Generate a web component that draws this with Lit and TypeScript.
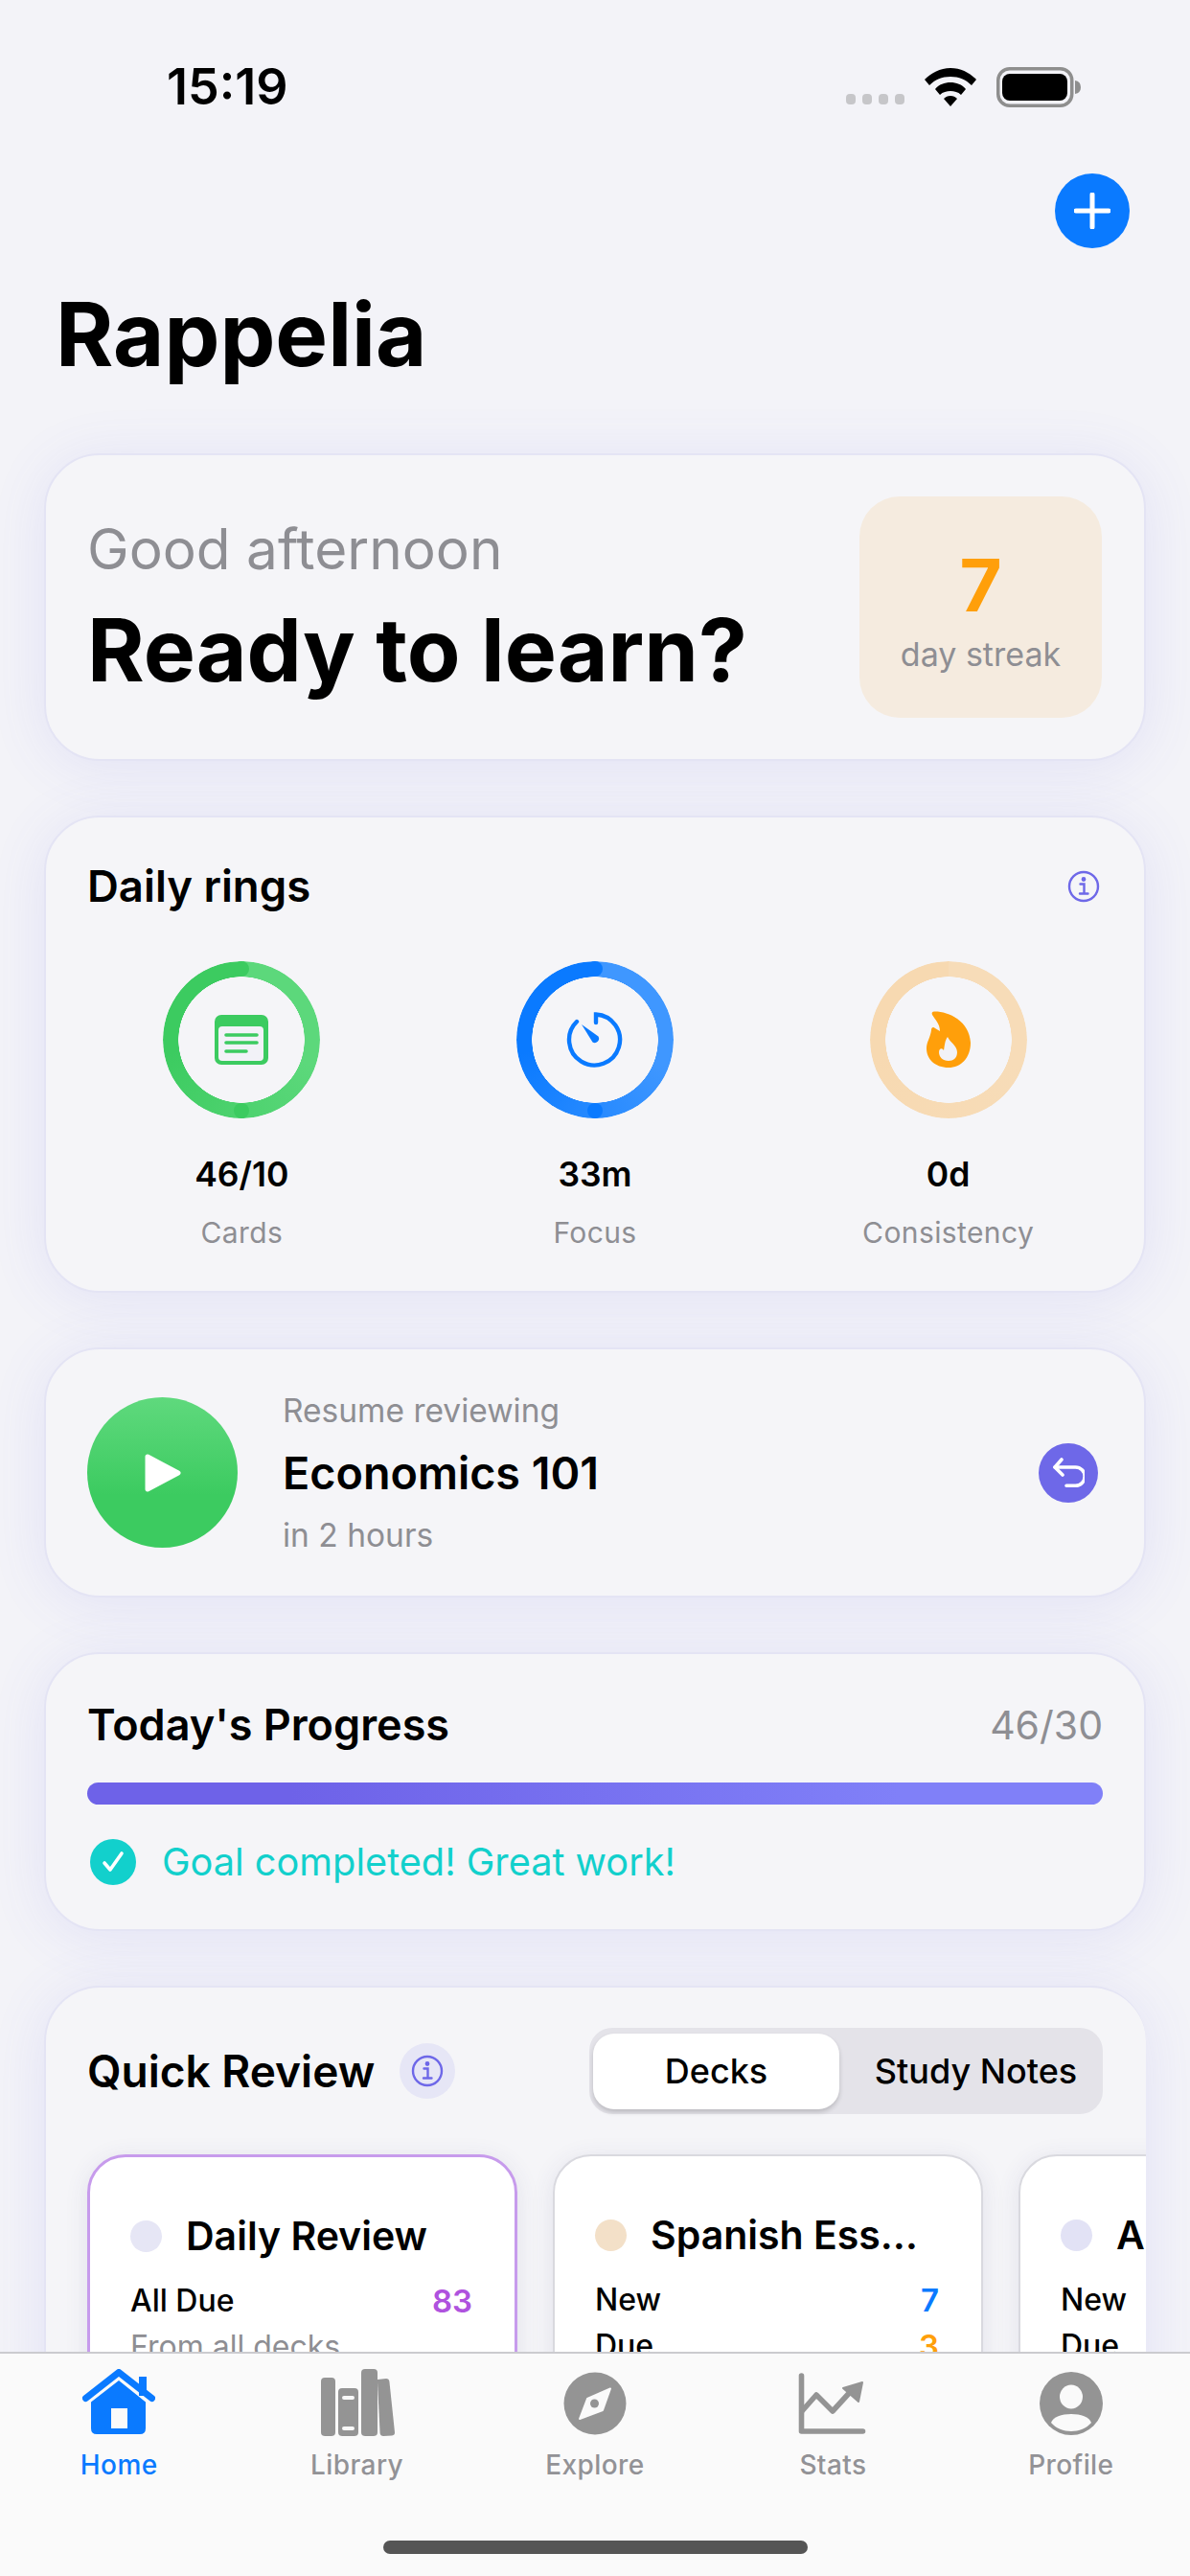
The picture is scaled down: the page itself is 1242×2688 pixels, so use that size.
import { LitElement, css, html } from "lit";
import { customElement } from "lit/decorators.js";

const infoIcon = (size: number) => html`
  <svg width=${size} height=${size} viewBox="0 0 34 34" fill="none" stroke="#6e68e8" stroke-width="2.4" stroke-linecap="round">
    <circle cx="17" cy="17" r="15"></circle>
    <path d="M13.5 14.5h4v10M13 24.5h8.5"></path>
    <circle cx="17" cy="9.5" r="1.2" fill="#6e68e8"></circle>
  </svg>
`;

const rings = [
  {
    tone: "green",
    value: "46/10",
    label: "Cards",
    progress: true,
    icon: html`<svg width="56" height="52" viewBox="0 0 56 52">
      <rect width="56" height="52" rx="7" fill="#3ccb60"></rect>
      <rect x="4" y="12" width="47" height="36" rx="4" fill="#f2f2f7"></rect>
      <path d="M12 21h32M12 29h32M12 38h21" stroke="#3ccb60" stroke-width="3.6" stroke-linecap="round"></path>
    </svg>`,
  },
  {
    tone: "blue",
    value: "33m",
    label: "Focus",
    progress: true,
    icon: html`<svg width="60" height="60" viewBox="0 0 60 60" fill="none">
      <path d="M31 12V3.5A26.5 26.5 0 1 1 11 11" stroke="#0a7aff" stroke-width="4.4" stroke-linecap="round"></path>
      <path d="M16 14l17.5 12.5a4.4 4.4 0 0 1-6 6z" fill="#0a7aff"></path>
    </svg>`,
  },
  {
    tone: "orange",
    value: "0d",
    label: "Consistency",
    progress: false,
    icon: html`<svg width="46" height="60" viewBox="0 0 46 60">
      <path fill="#ff9f0a" d="M8 .5C22 0 45 10 46 33 46 49 36 59 23 59 9 59 0 50 0 39 0 32 4 28 5 20 5 17 7 16 9 18L14 21C14 13 9 9 6 4 5 2 6 .5 8 .5Z"></path>
      <path fill="#f2f2f7" d="M22 27C24 32 32 36 32 43 32 49 28 52 23 52 17 52 13 48 13 43 13 39 16 38 18 41 19 36 19 31 22 27Z"></path>
    </svg>`,
  },
];

const decks = [
  { name: "Daily Review", dot: "#e6e6f5", selected: true, rows: [["All Due", "83", "purple"]], note: "From all decks" },
  { name: "Spanish Ess…", dot: "#f3e0c8", selected: false, rows: [["New", "7", "blue"], ["Due", "3", "amber"]], note: "" },
  { name: "All Decks", dot: "#e2e2f5", selected: false, rows: [["New", "5", "blue"], ["Due", "2", "amber"]], note: "" },
];

const tabIcons: Record<string, unknown> = {
  Home: html`<svg width="76" height="70" viewBox="0 0 76 70">
    <path d="M59 8h8v20h-8z" fill="#0a7aff"></path>
    <path d="M3.5 30.5 38 3.5l34.5 27" fill="none" stroke="#0a7aff" stroke-width="7" stroke-linecap="round" stroke-linejoin="round"></path>
    <path fill-rule="evenodd" fill="#0a7aff" d="M38 12 9 34.5V62q0 6 6 6h45q6 0 6-6V34.5ZM30 41h17v21H30Z"></path>
  </svg>`,
  Library: html`<svg width="80" height="70" viewBox="0 0 80 70" fill="#949494">
    <rect x="2" y="9" width="15" height="61" rx="4"></rect>
    <path fill-rule="evenodd" d="M24 20h13q4 0 4 4v42q0 4-4 4H24q-4 0-4-4V24q0-4 4-4ZM26 28a1.5 1.5 0 0 0 0 4h9a1.5 1.5 0 0 0 0-4ZM26 60a1.5 1.5 0 0 0 0 4h9a1.5 1.5 0 0 0 0-4Z"></path>
    <rect x="44" y="0" width="17" height="70" rx="4"></rect>
    <path d="M61 11l9-1q3 0 3.4 3L79 66q.3 3-3 3.5l-9 .5q-3 0-3.4-3L61 14Z"></path>
  </svg>`,
  Explore: html`<svg width="68" height="70" viewBox="0 0 68 70">
    <circle cx="34" cy="36" r="32.5" fill="#949494"></circle>
    <path d="M50 20.5 42 43 18 52 26 31Z" fill="#fafafa" stroke="#fafafa" stroke-width="2" stroke-linejoin="round"></path>
    <circle cx="33.5" cy="36" r="4.5" fill="#949494"></circle>
  </svg>`,
  Stats: html`<svg width="72" height="70" viewBox="0 0 72 70" fill="none" stroke="#949494" stroke-linecap="round" stroke-linejoin="round">
    <path d="M3.5 7v58h64" stroke-width="5.6"></path>
    <path d="M4 44l15-17 17 17 21-23" stroke-width="5.6"></path>
    <path d="M47 20l20-6-4 20Z" fill="#949494" stroke-width="2"></path>
  </svg>`,
  Profile: html`<svg width="68" height="70" viewBox="0 0 68 70">
    <circle cx="34" cy="36" r="33" fill="#949494"></circle>
    <ellipse cx="34" cy="29" rx="12" ry="12.5" fill="#fafafa"></ellipse>
    <path d="M13 56c2-6 11-9 21-9s19 3 21 9c-5 6-13 9-21 9s-16-3-21-9Z" fill="#fafafa"></path>
  </svg>`,
};

@customElement("app-root")
export class AppRoot extends LitElement {
  static styles = css`
    :host {
      display: block;
      position: relative;
      width: 1242px;
      height: 2688px;
      overflow: hidden;
      background: #f3f3f8;
      font-family: Inter, "Liberation Sans", sans-serif;
      color: #000;
    }
    * { box-sizing: border-box; }
    svg { display: block; }

    .status {
      display: flex;
      align-items: center;
      height: 181px;
      padding: 0 114px 0 174px;
    }
    .time { font-size: 52px; font-weight: 600; }
    .status-icons { display: flex; align-items: center; gap: 21px; margin-left: auto; }
    .signal { display: flex; gap: 7px; align-self: flex-end; padding-bottom: 3px; }
    .signal i { width: 10px; height: 11px; border-radius: 4px; background: #c6c6c9; }

    .nav { display: flex; justify-content: flex-end; padding-right: 63px; }
    .add {
      display: grid;
      place-items: center;
      width: 78px;
      height: 78px;
      border-radius: 50%;
      background: #0a7aff;
    }
    h1 {
      margin: 34px 0 68px 58px;
      font-size: 92px;
      line-height: 112px;
      font-weight: 700;
    }

    main { display: flex; flex-direction: column; gap: 57px; padding: 0 46px; }
    .card {
      border: 2px solid #e4e4f4;
      border-radius: 58px;
      background: #f5f5f8;
      box-shadow: 0 6px 60px rgba(90, 90, 230, 0.11);
      padding: 0 43px;
    }
    h2 { margin: 0; font-size: 45.5px; line-height: 58px; font-weight: 600; }

    .hero { display: flex; align-items: center; justify-content: space-between; height: 321px; }
    .hero-text { padding-top: 4px; }
    .greeting { font-size: 58.5px; line-height: 70px; color: #8e8e93; }
    .ready { margin-top: 15px; font-size: 91px; line-height: 110px; font-weight: 700; }
    .streak {
      display: flex;
      flex-direction: column;
      align-items: center;
      flex: none;
      width: 253px;
      height: 231px;
      margin-right: 1px;
      padding-top: 46px;
      border-radius: 42px;
      background: #f5ebdf;
    }
    .streak b { font-size: 76px; line-height: 92px; font-weight: 700; color: #ff9f0a; }
    .streak span { margin-top: 5px; font-size: 34px; line-height: 44px; color: #8e8e93; }

    .daily { height: 498px; padding-top: 43px; }
    .daily-head { display: flex; align-items: center; justify-content: space-between; padding-right: 3px; }
    .ring-grid { display: grid; grid-template-columns: repeat(3, 1fr); gap: 46px; margin-top: 49px; }
    .ring-item { display: flex; flex-direction: column; align-items: center; }
    .ring-wrap { position: relative; display: grid; place-items: center; width: 164px; height: 164px; }
    .ring-track {
      position: absolute;
      inset: 0;
      border-radius: 50%;
      background: conic-gradient(var(--light) 0deg, var(--light) 110deg, var(--dark) 260deg, var(--dark) 360deg);
      -webkit-mask: radial-gradient(closest-side, transparent calc(100% - 16.5px), #000 calc(100% - 16px));
      mask: radial-gradient(closest-side, transparent calc(100% - 16.5px), #000 calc(100% - 16px));
    }
    .green { --light: #5cd87b; --dark: #3ccb60; }
    .blue { --light: #3f97ff; --dark: #0a7aff; }
    .orange { --light: #f7dcb8; --dark: #f7d9b1; }
    .cap {
      position: absolute;
      left: 74px;
      width: 16px;
      height: 16px;
      border-radius: 50%;
      background: var(--dark);
    }
    .cap.top { top: 0; }
    .cap.bottom { bottom: 0; }
    .ring-value { margin-top: 37px; font-size: 35.5px; line-height: 44px; font-weight: 600; }
    .ring-label { margin-top: 18px; font-size: 30px; line-height: 40px; letter-spacing: 0.4px; color: #8e8e93; }

    .resume { display: flex; align-items: center; height: 261px; }
    .play {
      display: grid;
      place-items: center;
      flex: none;
      width: 157px;
      height: 157px;
      border-radius: 50%;
      background: linear-gradient(#5fd97d, #3ccb60 65%);
    }
    .resume-text { display: flex; flex-direction: column; margin-left: 47px; }
    .resume-text small { font-size: 33.5px; line-height: 44px; color: #8e8e93; }
    .resume-text strong { margin: 14px 0; font-size: 46.7px; line-height: 58px; font-weight: 600; }
    .undo {
      display: grid;
      place-items: center;
      width: 62px;
      height: 62px;
      margin-left: auto;
      margin-right: 5px;
      border-radius: 50%;
      background: #6e68e8;
    }

    .progress { height: 291px; padding-top: 45px; }
    .progress h2 { font-size: 45px; }
    .progress-head { display: flex; align-items: center; justify-content: space-between; }
    .progress-head span { font-size: 41px; color: #8e8e93; }
    .bar { height: 23px; margin-top: 31px; border-radius: 12px; background: linear-gradient(90deg, #6e62e8 20%, #8080f8 80%); }
    .goal { display: flex; align-items: center; gap: 27px; margin-top: 36px; padding-left: 3px; font-size: 39.7px; line-height: 48px; color: #12d0cc; }
    .goal i { display: grid; place-items: center; width: 48px; height: 48px; border-radius: 50%; background: #12d0cc; }

    .quick { height: 640px; padding: 42px 45px 0 43px; border-right-width: 0; overflow: hidden; }
    .quick h2 { font-size: 46px; }
    .quick-head { display: flex; align-items: center; }
    .chip { display: grid; place-items: center; width: 58px; height: 58px; margin-left: 26px; border-radius: 50%; background: #e6e6f6; }
    .segment {
      display: flex;
      align-items: center;
      width: 536px;
      height: 90px;
      margin-left: auto;
      padding: 0 4px;
      border-radius: 24px;
      background: #e4e3e9;
      font-size: 36px;
      font-weight: 500;
    }
    .segment span { flex: 1; padding-left: 14px; text-align: center; }
    .segment .on {
      flex: none;
      width: 257px;
      padding-left: 0;
      line-height: 79px;
      border-radius: 22px;
      background: #fff;
      box-shadow: 0 3px 5px rgba(0, 0, 0, 0.18);
    }
    .decks { display: flex; gap: 37px; margin-top: 42px; }
    .deck {
      flex: none;
      width: 449px;
      height: 400px;
      padding: 55px 44px 0 42px;
      border: 2px solid #d9d9df;
      border-radius: 40px;
      background: #fff;
      box-shadow: 0 4px 24px rgba(60, 60, 120, 0.1);
    }
    .deck.selected { border: 3px solid #c79bec; }
    .deck-title { display: flex; align-items: center; gap: 25px; font-size: 41px; line-height: 54px; font-weight: 600; white-space: nowrap; }
    .deck-title i { flex: none; width: 33px; height: 33px; border-radius: 50%; }
    .deck-rows { display: flex; flex-direction: column; gap: 4px; margin-top: 19px; }
    .deck-row { display: flex; justify-content: space-between; font-size: 32px; line-height: 44px; font-weight: 500; }
    .deck-row b { font-size: 33px; font-weight: 600; }
    .purple { color: #af52de; }
    .blue-text { color: #0a7aff; }
    .amber { color: #ff9f0a; }
    .note { font-size: 32px; line-height: 44px; color: #8e8e93; }

    .tabbar {
      position: absolute;
      left: 0;
      right: 0;
      bottom: 0;
      height: 234px;
      padding-top: 16px;
      border-top: 2px solid #cbcbcf;
      background: #fafafa;
    }
    .tabs { display: grid; grid-template-columns: repeat(5, 1fr); }
    .tab { display: flex; flex-direction: column; align-items: center; color: #929296; }
    .tab.active { color: #0a7aff; }
    .tab span { margin-top: 12px; font-size: 28px; line-height: 36px; font-weight: 500; letter-spacing: 0.4px; }
    .tab svg { height: 70px; }
    .indicator { width: 443px; height: 14px; margin: 61px auto 0; border-radius: 7px; background: #555; }
  `;

  render() {
    return html`
      <div class="status">
        <div class="time">15:19</div>
        <div class="status-icons">
          <div class="signal"><i></i><i></i><i></i><i></i></div>
          <svg width="54" height="40" viewBox="0 0 54 40">
            <path d="M27 0C16 0 7 5 0 12l5 6c6-6 13-9 22-9s16 3 22 9l5-6C47 5 38 0 27 0Z"></path>
            <path d="M27 15c-6 0-12 2-16 7l5 6c3-3 7-4 11-4s8 1 11 4l5-6c-4-5-10-7-16-7Z"></path>
            <path d="M27 29c-3 0-5 1-7 3l7 8 7-8c-2-2-4-3-7-3Z"></path>
          </svg>
          <svg width="88" height="42" viewBox="0 0 88 42">
            <rect x="1.75" y="1.75" width="77" height="38.5" rx="12" fill="none" stroke="#8e8e8e" stroke-width="3.5"></rect>
            <rect x="6" y="7" width="68" height="28" rx="8"></rect>
            <path d="M82 14q6 1 6 7t-6 7Z" fill="#8e8e8e"></path>
          </svg>
        </div>
      </div>
      <div class="nav">
        <div class="add">
          <svg width="38" height="38" viewBox="0 0 38 38" stroke="#fff" stroke-width="5" stroke-linecap="round">
            <path d="M19 2v34M2 19h34"></path>
          </svg>
        </div>
      </div>
      <h1>Rappelia</h1>
      <main>
        <section class="card hero">
          <div class="hero-text">
            <div class="greeting">Good afternoon</div>
            <div class="ready">Ready to learn?</div>
          </div>
          <div class="streak"><b>7</b><span>day streak</span></div>
        </section>

        <section class="card daily">
          <div class="daily-head"><h2>Daily rings</h2>${infoIcon(34)}</div>
          <div class="ring-grid">
            ${rings.map(
              (r) => html`
                <div class="ring-item ${r.tone}">
                  <div class="ring-wrap">
                    <div class="ring-track"></div>
                    ${r.progress ? html`<div class="cap top"></div><div class="cap bottom"></div>` : ""}
                    ${r.icon}
                  </div>
                  <div class="ring-value">${r.value}</div>
                  <div class="ring-label">${r.label}</div>
                </div>
              `
            )}
          </div>
        </section>

        <section class="card resume">
          <div class="play">
            <svg width="38" height="42" viewBox="0 0 38 42"><path d="M3 4 35 21 3 38Z" fill="#fff" stroke="#fff" stroke-width="5" stroke-linejoin="round"></path></svg>
          </div>
          <div class="resume-text">
            <small>Resume reviewing</small>
            <strong>Economics 101</strong>
            <small>in 2 hours</small>
          </div>
          <div class="undo">
            <svg width="34" height="36" viewBox="0 0 34 36" fill="none" stroke="#fff" stroke-width="3.6" stroke-linecap="round" stroke-linejoin="round">
              <path d="M10 4 3 12l8 8"></path>
              <path d="M3 12h21.5a9.6 9.6 0 0 1 0 19.3H15"></path>
            </svg>
          </div>
        </section>

        <section class="card progress">
          <div class="progress-head"><h2>Today's Progress</h2><span>46/30</span></div>
          <div class="bar"></div>
          <div class="goal">
            <i>
              <svg width="28" height="26" viewBox="0 0 28 26" fill="none" stroke="#fff" stroke-width="3.6" stroke-linecap="round" stroke-linejoin="round"><path d="M5 14l6 7L23 4"></path></svg>
            </i>
            Goal completed! Great work!
          </div>
        </section>

        <section class="card quick">
          <div class="quick-head">
            <h2>Quick Review</h2>
            <div class="chip">${infoIcon(34)}</div>
            <div class="segment"><span class="on">Decks</span><span>Study Notes</span></div>
          </div>
          <div class="decks">
            ${decks.map(
              (d) => html`
                <div class="deck ${d.selected ? "selected" : ""}">
                  <div class="deck-title"><i style="background:${d.dot}"></i>${d.name}</div>
                  <div class="deck-rows">
                    ${d.rows.map(
                      ([label, value, tone]) => html`
                        <div class="deck-row"><span>${label}</span><b class=${tone === "blue" ? "blue-text" : tone}>${value}</b></div>
                      `
                    )}
                    ${d.note ? html`<div class="note">${d.note}</div>` : ""}
                  </div>
                </div>
              `
            )}
          </div>
        </section>
      </main>

      <nav class="tabbar">
        <div class="tabs">
          ${Object.keys(tabIcons).map(
            (name) => html`
              <div class="tab ${name === "Home" ? "active" : ""}">
                ${tabIcons[name]}
                <span>${name}</span>
              </div>
            `
          )}
        </div>
        <div class="indicator"></div>
      </nav>
    `;
  }
}
